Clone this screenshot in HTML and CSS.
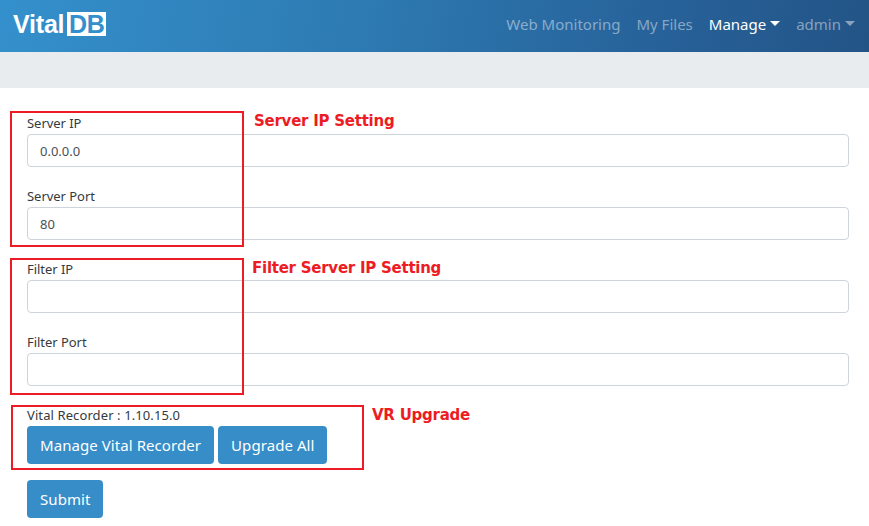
FILE: index.html
```html
<!DOCTYPE html>
<html lang="en">
<head>
<meta charset="utf-8">
<title>VitalDB</title>
<link rel="stylesheet" href="styles.css">
</head>
<body>
<nav class="navbar">
  <a class="brand" href="#">Vital<span class="brand-box">DB</span></a>
  <ul class="nav">
    <li><a class="nav-link" href="#">Web Monitoring</a></li>
    <li><a class="nav-link" href="#">My Files</a></li>
    <li><a class="nav-link active caret" href="#">Manage</a></li>
    <li><a class="nav-link caret" href="#">admin</a></li>
  </ul>
</nav>
<div class="breadcrumb"></div>
<main class="content">
  <form class="form">
    <div class="group"><label class="label" for="a">Server IP</label><input class="input" id="a" value="0.0.0.0"></div>
    <div class="group"><label class="label" for="b">Server Port</label><input class="input" id="b" value="80"></div>
    <div class="group"><label class="label" for="c">Filter IP</label><input class="input" id="c"></div>
    <div class="group"><label class="label" for="d">Filter Port</label><input class="input" id="d"></div>
    <div class="vr">
      <div class="vr-text">Vital Recorder : 1.10.15.0</div>
      <div class="vr-actions">
        <button type="button" class="btn">Manage Vital Recorder</button>
        <button type="button" class="btn">Upgrade All</button>
      </div>
    </div>
    <button type="button" class="btn">Submit</button>
  </form>
  <div class="mark mark-server"></div>
  <div class="mark mark-filter"></div>
  <div class="mark mark-vr"></div>
  <span class="note note-server">Server IP Setting</span>
  <span class="note note-filter">Filter Server IP Setting</span>
  <span class="note note-vr">VR Upgrade</span>
</main>
</body>
</html>
```
FILE: styles.css
```css
* { box-sizing: border-box; }
html, body { margin: 0; height: 100%; overflow: hidden; }
body {
  background: #fff;
  color: #343a40;
  font-family: "Noto Sans", "Open Sans", sans-serif;
  font-size: 14px;
}
.navbar {
  height: 52px;
  display: flex;
  align-items: center;
  justify-content: space-between;
  padding: 0 14px 4px 13px;
  background: linear-gradient(100deg, #3490cc 0%, #2e7bb3 40%, #27629a 75%, #235486 100%);
}
.brand {
  display: flex;
  align-items: center;
  gap: 3px;
  color: #fff;
  font-family: "Liberation Sans", sans-serif;
  font-weight: 700;
  font-size: 25px;
  line-height: 24px;
  letter-spacing: -0.2px;
  text-decoration: none;
}
.brand-box {
  background: #fff;
  color: #3490cc;
  height: 24px;
  width: 39px;
  line-height: 24px;
  text-align: center;
}
.nav { display: flex; list-style: none; margin: 0; padding: 0; gap: 16px; }
.nav-link {
  color: rgba(255, 255, 255, .46);
  font-size: 15px;
  line-height: 24px;
  text-decoration: none;
  display: flex;
  align-items: center;
}
.nav-link.active { color: #fff; }
.caret::after {
  content: "";
  margin-left: 4px;
  margin-top: -2px;
  border-top: 5px solid currentColor;
  border-left: 5px solid transparent;
  border-right: 5px solid transparent;
}
.breadcrumb { height: 36px; background: #e9ecef; }
.content { position: relative; padding: 25px 20px 0 27px; }
.group { margin-bottom: 19px; }
.label { display: block; height: 21px; line-height: 20px; font-size: 13px; letter-spacing: -.04px; }
.input {
  display: block;
  width: 100%;
  height: 33px;
  padding: 0 12px;
  border: 1px solid #ced4da;
  border-radius: 4px;
  color: #495057;
  font: inherit;
  font-size: 13px;
  background: #fff;
}
.vr { margin-top: -1px; margin-bottom: 16px; }
.vr-text { height: 22px; line-height: 23px; font-size: 13px; letter-spacing: .1px; }
.vr-actions { display: flex; gap: 4px; }
.btn {
  height: 38px;
  padding: 0 13px;
  border: 0;
  border-radius: 4px;
  background: #368dc8;
  color: #fff;
  font: inherit;
  font-size: 15px;
  letter-spacing: .07px;
}
.mark { position: absolute; border: 2px solid #ed1c24; }
.mark-server { left: 10px; top: 23px; width: 234px; height: 136px; }
.mark-filter { left: 10px; top: 170px; width: 234px; height: 137px; }
.mark-vr { left: 11px; top: 317px; width: 353px; height: 65px; }
.note {
  position: absolute;
  color: #ed1c24;
  font-family: "DejaVu Sans", sans-serif;
  font-weight: 700;
  font-size: 15px;
  letter-spacing: -.25px;
  line-height: 20px;
}
.note-server { left: 254px; top: 23px; }
.note-filter { left: 252px; top: 170px; }
.note-vr { left: 372px; top: 317px; }
```
